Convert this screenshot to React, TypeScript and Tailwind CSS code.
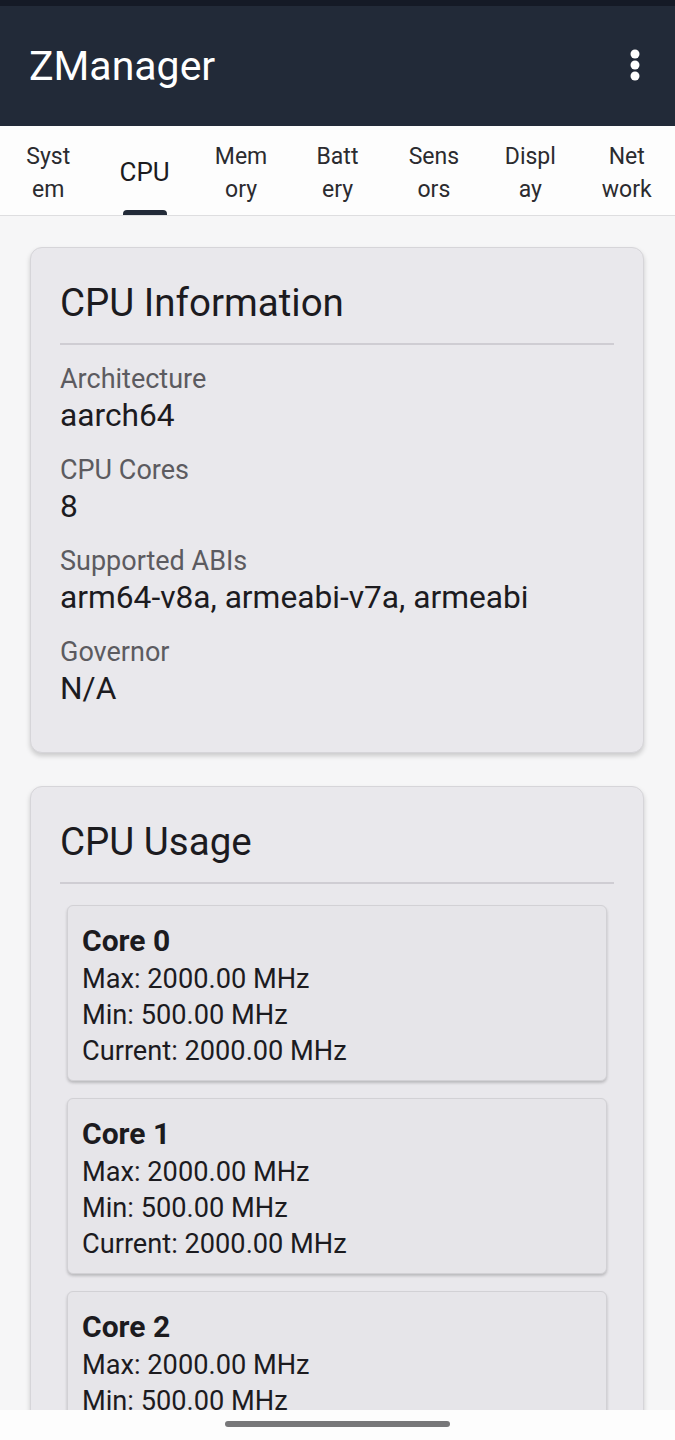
import React from "react";

const tabs: { lines: string[]; active?: boolean }[] = [
  { lines: ["Syst", "em"] },
  { lines: ["CPU"], active: true },
  { lines: ["Mem", "ory"] },
  { lines: ["Batt", "ery"] },
  { lines: ["Sens", "ors"] },
  { lines: ["Displ", "ay"] },
  { lines: ["Net", "work"] },
];

const info = [
  { label: "Architecture", value: "aarch64" },
  { label: "CPU Cores", value: "8" },
  { label: "Supported ABIs", value: "arm64-v8a, armeabi-v7a, armeabi" },
  { label: "Governor", value: "N/A" },
];

const cores = [0, 1, 2, 3];

export default function App() {
  return (
    <div
      className="flex h-[1440px] w-[675px] flex-col overflow-hidden bg-[#f6f6f7] text-[#1c1b1f]"
      style={{ fontFamily: "Roboto, 'Liberation Sans', sans-serif" }}
    >
      <div className="h-[6px] shrink-0 bg-[#151a26]" />
      <header className="flex h-[120px] shrink-0 items-center justify-between bg-[#222a38] pl-[29px] pr-[34px]">
        <h1 className="text-[41px] leading-none text-white">ZManager</h1>
        <svg width="12" height="34" viewBox="0 0 12 34" className="mt-[-2px]">
          <circle cx="6" cy="6" r="4.5" fill="#fff" />
          <circle cx="6" cy="17" r="4.5" fill="#fff" />
          <circle cx="6" cy="28" r="4.5" fill="#fff" />
        </svg>
      </header>
      <nav className="flex h-[90px] shrink-0 border-b border-[#dedee0] bg-[#fdfdfd]">
        {tabs.map((t, i) => (
          <div key={i} className="relative flex flex-1 flex-col items-center justify-center pt-[4px]">
            {t.lines.map((l, j) => (
              <span
                key={j}
                className={
                  t.active
                    ? "text-[26px] leading-[33px] text-[#1c1b1f]"
                    : "text-[23px] leading-[33px] text-[#2b2b2f]"
                }
              >
                {l}
              </span>
            ))}
            {t.active && (
              <div className="absolute bottom-0 left-1/2 h-[5px] w-[44px] -translate-x-1/2 rounded-t-[4px] bg-[#222a38]" />
            )}
          </div>
        ))}
      </nav>
      <main className="flex flex-1 flex-col gap-[33px] overflow-hidden pl-[30px] pr-[31px] pt-[31px]">
        <section className="shrink-0 rounded-[12px] border border-[#d6d5d9] bg-[#e9e8ec] px-[29px] pb-[43px] pt-[29px] shadow-[0_3px_5px_rgba(0,0,0,0.18)]">
          <h2 className="text-[38.5px] leading-[52px]">CPU Information</h2>
          <div className="mt-[14px] h-[2px] bg-[#cfcdd3]" />
          <div className="mt-[17px] flex flex-col gap-[17px]">
            {info.map((it) => (
              <div key={it.label} className="flex flex-col">
                <span className="text-[27px] leading-[34px] text-[#5c5b60]">{it.label}</span>
                <span className="text-[31.7px] leading-[40px] text-[#1c1b1f]">{it.value}</span>
              </div>
            ))}
          </div>
        </section>
        <section className="shrink-0 rounded-[12px] border border-[#d6d5d9] bg-[#e9e8ec] px-[29px] pt-[29px] shadow-[0_3px_5px_rgba(0,0,0,0.18)]">
          <h2 className="text-[38.5px] leading-[52px]">CPU Usage</h2>
          <div className="mt-[14px] h-[2px] bg-[#cfcdd3]" />
          <div className="mt-[21px] flex flex-col gap-[17px] px-[7px]">
            {cores.map((c) => (
              <div
                key={c}
                className="flex flex-col rounded-[6px] border border-[#d2d1d5] bg-[#e6e5e9] pb-[11px] pl-[14px] pt-[15px] shadow-[0_2px_3px_rgba(0,0,0,0.2)]"
              >
                <span className="text-[30px] font-bold leading-[40px]">Core {c}</span>
                <span className="text-[27.2px] leading-[36px]">Max: 2000.00 MHz</span>
                <span className="text-[27.2px] leading-[36px]">Min: 500.00 MHz</span>
                <span className="text-[27.2px] leading-[36px]">Current: 2000.00 MHz</span>
              </div>
            ))}
          </div>
        </section>
      </main>
      <footer className="flex h-[30px] shrink-0 items-start justify-center bg-[#fdfdfd] pt-[11px]">
        <div className="h-[6px] w-[225px] rounded-full bg-[#777779]" />
      </footer>
    </div>
  );
}
